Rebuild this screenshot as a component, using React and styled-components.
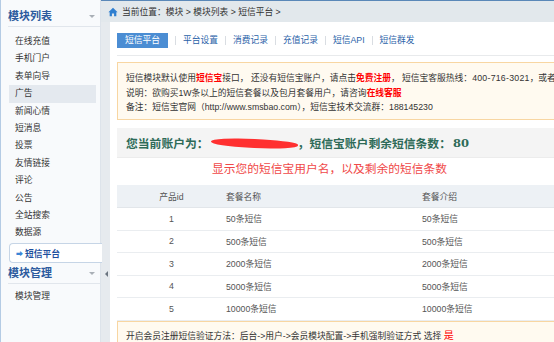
import styled, { createGlobalStyle } from "styled-components";

const GlobalStyle = createGlobalStyle`
  html, body {
    margin: 0;
    padding: 0;
    background: #ffffff;
  }
  body {
    font-family: "Liberation Sans", "Noto Sans CJK SC", sans-serif;
    font-size: 8.75px;
    color: #333;
  }
`;

const menuItems = [
  "在线充值",
  "手机门户",
  "表单向导",
  "广告",
  "新闻心情",
  "短消息",
  "投票",
  "友情链接",
  "评论",
  "公告",
  "全站搜索",
  "数据源",
];

const tabs = ["短信平台", "平台设置", "消费记录", "充值记录", "短信API", "短信群发"];

const packages = [
  { id: 1, name: "50条短信" },
  { id: 2, name: "500条短信" },
  { id: 3, name: "2000条短信" },
  { id: 4, name: "5000条短信" },
  { id: 5, name: "10000条短信" },
];

function App() {
  return (
    <>
      <GlobalStyle />
      <Page>
        <Sidebar>
          <GroupTitle>
            模块列表
            <Caret />
          </GroupTitle>
          <MenuList>
            {menuItems.map((item) => (
              <MenuItem key={item} hover={item === "广告"}>
                {item}
              </MenuItem>
            ))}
            <ActiveItem>
              <Arrow>➡</Arrow>短信平台
            </ActiveItem>
          </MenuList>
          <GroupTitle>
            模块管理
            <Caret />
          </GroupTitle>
          <MenuList top={4}>
            <MenuItem>模块管理</MenuItem>
          </MenuList>
        </Sidebar>

        <Main>
          <TopBar>
            <HomeIcon viewBox="0 0 12 12">
              <path d="M6 1 L11.5 6.3 L10 6.3 L10 11 L7.3 11 L7.3 7.8 L4.7 7.8 L4.7 11 L2 11 L2 6.3 L0.5 6.3 Z" fill="#2f7fd0" />
            </HomeIcon>
            当前位置：模块 &gt; 模块列表 &gt; 短信平台 &gt;
          </TopBar>

          <Body>
            <Splitter>
              <SplitArrow />
            </Splitter>

            <Panel>
              <TabBar>
                {tabs.map((t, i) => (
                  <TabWrap key={t}>
                    {i > 0 && <TabSep />}
                    <Tab active={i === 0}>{t}</Tab>
                  </TabWrap>
                ))}
              </TabBar>

              <Notice>
                <NoticeLine>
                  短信模块默认使用<Hot>短信宝</Hot>接口， 还没有短信宝账户，请点击<Hot>免费注册</Hot>， 短信宝客服热线：<Phone>400-716-3021</Phone>，或者联系在线客服
                </NoticeLine>
                <NoticeLine>
                  说明：欲购买1W条以上的短信套餐以及包月套餐用户，请咨询<Hot>在线客服</Hot>
                </NoticeLine>
                <NoticeLine>
                  备注：短信宝官网（http://www.smsbao.com），短信宝技术交流群：188145230
                </NoticeLine>
              </Notice>

              <AccountBar>
                您当前账户为：
                <Scribble />
                ，短信宝账户剩余短信条数：<Count>80</Count>
              </AccountBar>

              <Hint>显示您的短信宝用户名，以及剩余的短信条数</Hint>

              <Table>
                <colgroup>
                  <col style={{ width: 109 }} />
                  <col style={{ width: 196 }} />
                  <col />
                </colgroup>
                <thead>
                  <tr>
                    <Th center>产品id</Th>
                    <Th>套餐名称</Th>
                    <Th>套餐介绍</Th>
                  </tr>
                </thead>
                <tbody>
                  {packages.map((p) => (
                    <tr key={p.id}>
                      <Td center>{p.id}</Td>
                      <Td>{p.name}</Td>
                      <Td>{p.name}</Td>
                    </tr>
                  ))}
                </tbody>
              </Table>

              <Footer>
                开启会员注册短信验证方法：后台-&gt;用户-&gt;会员模块配置-&gt;手机强制验证方式 选择 <Yes>是</Yes>
              </Footer>
            </Panel>
          </Body>
        </Main>
      </Page>
    </>
  );
}

export default App;

const Page = styled.div`
  width: 554px;
  height: 342px;
  overflow: hidden;
  display: flex;
  background: #ffffff;
`;

const Sidebar = styled.div`
  width: 101px;
  flex-shrink: 0;
  height: 100%;
  background: #f8fafc;
  border-left: 1px solid #b4cbe4;
  border-right: 1px solid #dde3ea;
  box-sizing: border-box;
  padding-top: 8px;
  position: relative;
  z-index: 1;
`;

const GroupTitle = styled.div`
  position: relative;
  margin-left: 7px;
  padding-bottom: 2px;
  border-bottom: 1px solid #e1e6ec;
  height: 16px;
  line-height: 16px;
  font-size: 11px;
  font-weight: 700;
  color: #2c5a9e;
`;

const Caret = styled.span`
  position: absolute;
  right: 5px;
  top: 7px;
  width: 0;
  height: 0;
  border-left: 3.5px solid transparent;
  border-right: 3.5px solid transparent;
  border-top: 3px solid #a9afb6;
`;

const MenuList = styled.div`
  display: flex;
  flex-direction: column;
  padding: ${(p) => p.top ?? 6}px 0 2px 8px;
`;

const MenuItem = styled.div`
  height: 17.4px;
  line-height: 17.4px;
  padding-left: 6px;
  width: 81px;
  color: #333;
  background: ${(p) => (p.hover ? "#e4e9ef" : "transparent")};
`;

const ActiveItem = styled.div`
  margin-top: 1px;
  height: 20px;
  line-height: 19px;
  width: 93px;
  box-sizing: border-box;
  padding-left: 6px;
  background: #ffffff;
  border: 1px solid #c6d5e6;
  border-right: none;
  border-radius: 4px 0 0 4px;
  font-weight: 700;
  color: #1d4f9e;
`;

const Arrow = styled.span`
  font-size: 7px;
  color: #3a86d6;
  margin-right: 2px;
  vertical-align: 1px;
`;

const Main = styled.div`
  flex: 1;
  min-width: 0;
  display: flex;
  flex-direction: column;
`;

const TopBar = styled.div`
  height: 21px;
  flex-shrink: 0;
  border-top: 1px solid #5a88b8;
  background: #e2e8ec;
  display: flex;
  align-items: center;
  padding-left: 7px;
  color: #333;
  white-space: nowrap;
`;

const HomeIcon = styled.svg`
  width: 10px;
  height: 10px;
  margin-right: 4px;
`;

const Body = styled.div`
  flex: 1;
  display: flex;
  min-height: 0;
`;

const Splitter = styled.div`
  width: 9px;
  flex-shrink: 0;
  background: #e6eaee;
  position: relative;
`;

const SplitArrow = styled.span`
  position: absolute;
  left: 4px;
  top: 249px;
  width: 0;
  height: 0;
  border-top: 3px solid transparent;
  border-bottom: 3px solid transparent;
  border-right: 3px solid #6b7580;
`;

const Panel = styled.div`
  flex: 1;
  min-width: 0;
  background: #ffffff;
  padding: 11px 0 0 7px;
`;

const TabBar = styled.div`
  width: 460px;
  display: flex;
  align-items: center;
  height: 15px;
  padding-bottom: 7px;
  border-bottom: 1px solid #e8eaec;
`;

const TabWrap = styled.div`
  display: flex;
  align-items: center;
`;

const TabSep = styled.span`
  width: 1px;
  height: 9px;
  background: #d9dde2;
  margin: 0 7px 0 7px;
`;

const Tab = styled.span`
  height: 15px;
  line-height: 15px;
  padding: 0 ${(p) => (p.active ? "8px" : "0")};
  color: ${(p) => (p.active ? "#ffffff" : "#2a62a8")};
  background: ${(p) => (p.active ? "#4b8dd3" : "transparent")};
`;

const Notice = styled.div`
  width: 460px;
  margin-top: 6px;
  background: #fffaf0;
  border: 1px solid #f8d6a2;
  padding: 8px 8px 4.5px;
  white-space: nowrap;
`;

const NoticeLine = styled.div`
  line-height: 14.5px;
  color: #333;
`;

const Hot = styled.span`
  color: #ff0000;
  font-weight: 700;
`;

const Phone = styled.span`
  letter-spacing: 0.25px;
`;

const AccountBar = styled.div`
  width: 460px;
  margin-top: 8px;
  height: 30px;
  padding-left: 9px;
  background: #f4f4f4;
  border-bottom: 1px solid #ececec;
  box-sizing: border-box;
  font-size: 11.8px;
  font-weight: 700;
  color: #2e6b58;
  white-space: nowrap;
  display: flex;
  align-items: center;
`;

const Scribble = styled.span`
  display: inline-block;
  width: 87px;
  height: 9px;
  margin: 1px 0 0 2px;
  border-radius: 50% 40% 50% 45%;
  background: #ff3030;
  transform: rotate(3deg);
`;

const Count = styled.span`
  font-family: "DejaVu Serif", "Liberation Serif", serif;
  font-size: 11.5px;
  color: #2e6b58;
  margin-left: 2px;
`;

const Hint = styled.div`
  width: 425px;
  text-align: center;
  height: 21px;
  line-height: 21px;
  font-size: 11.75px;
  color: #f04848;
`;

const Table = styled.table`
  margin-top: 6px;
  width: 460px;
  border-collapse: collapse;
  color: #555;
`;

const Th = styled.th`
  height: 22px;
  padding: 0;
  background: #edf1f5;
  border-bottom: 1px solid #e2e6ea;
  font-weight: 400;
  text-align: ${(p) => (p.center ? "center" : "left")};
`;

const Td = styled.td`
  height: 21.5px;
  padding: 0;
  border-bottom: 1px solid #eaedf0;
  text-align: ${(p) => (p.center ? "center" : "left")};
`;

const Footer = styled.div`
  width: 460px;
  height: 30px;
  line-height: 28px;
  padding-left: 8px;
  background: #fffaf0;
  border: 1px solid #f8d6a2;
  color: #333;
  white-space: nowrap;
`;

const Yes = styled.span`
  color: #ff0000;
  font-size: 10px;
`;
